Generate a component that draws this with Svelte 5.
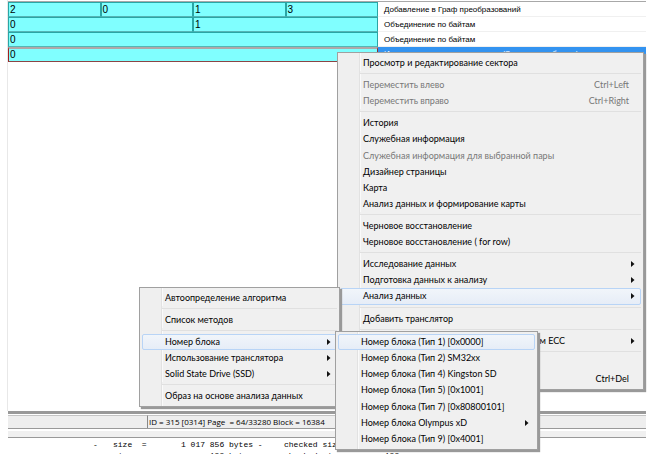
<script>
  const rows = [
    { cells: [['2', 1], ['0', 1], ['1', 1], ['3', 1]], note: 'Добавление в Граф преобразований' },
    { cells: [['0', 2], ['1', 2]], note: 'Объединение по байтам' },
    { cells: [['0', 4]], note: 'Объединение по байтам' },
    { cells: [['0', 4]], note: 'Исходные данные для анализа (Запись с разбором)', current: true }
  ];

  const sep = { sep: true };
  const menus = [
    {
      name: 'context',
      items: [
        { text: 'Просмотр и редактирование сектора' },
        sep,
        { text: 'Переместить влево', key: 'Ctrl+Left', off: true },
        { text: 'Переместить вправо', key: 'Ctrl+Right', off: true },
        sep,
        { text: 'История' },
        { text: 'Служебная информация' },
        { text: 'Служебная информация для выбранной пары', off: true },
        { text: 'Дизайнер страницы' },
        { text: 'Карта' },
        { text: 'Анализ данных и формирование карты' },
        sep,
        { text: 'Черновое восстановление' },
        { text: 'Черновое восстановление ( for row)' },
        sep,
        { text: 'Исследование данных', sub: true },
        { text: 'Подготовка данных к анализу', sub: true },
        { text: 'Анализ данных', sub: true, open: true },
        sep,
        { text: 'Добавить транслятор' },
        sep,
        { text: 'Коррекция ошибок по выбранным методам ECC', sub: true },
        sep,
        { text: 'Свойства' },
        { text: 'Удалить', key: 'Ctrl+Del' }
      ]
    },
    {
      name: 'analysis',
      items: [
        { text: 'Автоопределение алгоритма' },
        sep,
        { text: 'Список методов' },
        sep,
        { text: 'Номер блока', sub: true, open: true },
        { text: 'Использование транслятора', sub: true },
        { text: 'Solid State Drive (SSD)', sub: true },
        sep,
        { text: 'Образ на основе анализа данных' }
      ]
    },
    {
      name: 'types',
      items: [
        { text: 'Номер блока (Тип 1) [0x0000]', open: true },
        { text: 'Номер блока (Тип 2) SM32xx' },
        { text: 'Номер блока (Тип 4) Kingston SD' },
        { text: 'Номер блока (Тип 5) [0x1001]' },
        { text: 'Номер блока (Тип 7) [0x80800101]' },
        { text: 'Номер блока Olympus xD', sub: true },
        { text: 'Номер блока (Тип 9) [0x4001]' }
      ]
    }
  ];

  const log = [
    ['-', 'size  =', '1 017 856 bytes -', 'checked size = 1 017 856'],
    ['-', 'size  =', '      188 bytes -', 'checked size =       188']
  ];
</script>

<div class="window">
  <div class="work">
    <table>
      <colgroup><col class="q" /><col class="q" /><col class="q" /><col class="q" /><col /></colgroup>
      <tbody>
        {#each rows as row}
          <tr class:current={row.current}>
            {#each row.cells as [value, span]}
              <td class="block" colspan={span}>{value}</td>
            {/each}
            <td class="note">{row.note}</td>
          </tr>
        {/each}
      </tbody>
    </table>
  </div>

  <footer class="status">
    <div class="pane"></div>
    <div class="pane info">ID = 315 [0314] Page &nbsp;= 64/33280 Block = 16384</div>
  </footer>
  <div class="splitter"></div>
  <div class="log">
    {#each log as line}
      <div class="line">
        {#each line as part}<span>{part}</span>{/each}
      </div>
    {/each}
  </div>

  {#each menus as menu}
    <div class="menu {menu.name}" role="menu">
      {#each menu.items as item}
        {#if item.sep}
          <div class="sep" role="separator"></div>
        {:else}
          <button role="menuitem" class:open={item.open} disabled={item.off}>
            <span class="label">{item.text}</span>
            {#if item.key}<span class="key">{item.key}</span>{/if}
            {#if item.sub}
              <svg width="4" height="6" viewBox="0 0 4 6" aria-hidden="true"><path d="M0 0L3.5 3L0 6Z" fill="#111" /></svg>
            {/if}
          </button>
        {/if}
      {/each}
    </div>
  {/each}
</div>

<style>
  :global(body) {
    margin: 0;
    background: #fff;
    overflow: hidden;
  }
  .window {
    position: relative;
    box-sizing: border-box;
    height: 100vh;
    padding: 0 4px 0 7px;
    overflow: hidden;
    display: flex;
    flex-direction: column;
    font-family: Lato, 'Open Sans', sans-serif;
    font-size: 9px;
    color: #000;
  }
  .work {
    flex: 1;
    min-height: 0;
    padding-top: 1px;
    border-left: 1px solid #e8e8e8;
  }
  table {
    width: 100%;
    table-layout: fixed;
    border-collapse: separate;
    border-spacing: 0;
    border-top: 1px solid #a8a8a8;
    font-family: 'Liberation Sans', sans-serif;
  }
  .q {
    width: 14.5%;
  }
  td {
    box-sizing: border-box;
    height: 15px;
    padding: 0 1px;
    line-height: 12px;
    white-space: nowrap;
    overflow: hidden;
  }
  .block {
    background: #80ffff;
    border: 1px solid #2aa5a5;
    border-bottom-color: #55b5b5;
    font-size: 10px;
  }
  .note {
    padding: 1px 6px 0;
    border-bottom: 1px solid #f0f0f0;
    font-size: 8px;
  }
  .current .block {
    border-color: #b0a8a8 #8a3030 #8a4545 #a02020;
    border-top-width: 2px;
  }
  .current .note {
    padding-top: 0;
    background: #3393f0;
    color: #fff;
  }
  .status {
    display: flex;
    height: 13px;
    padding-top: 1px;
    margin-left: 1px;
    border-top: 3px solid #999;
    border-bottom: 1px solid #999;
    background: #fff;
  }
  .pane {
    flex: 0 0 139px;
    border-top: 1px solid #c4c4c4;
    background: #eee;
    line-height: 12px;
  }
  .info {
    flex: 1;
    border-left: 1px solid #888;
    padding-left: 1px;
    font-family: 'Open Sans', sans-serif;
    font-size: 8px;
    white-space: nowrap;
  }
  .splitter {
    height: 6px;
    margin: 2px 0 0 1px;
    background: #f0f0f0;
    border-bottom: 1px solid #999;
  }
  .log {
    height: 15px;
    padding: 1px 0 0 86px;
    overflow: hidden;
    font: 8px/11px 'Liberation Mono', monospace;
  }
  .line {
    display: grid;
    grid-template-columns: 20px 68px 103px 1fr;
    white-space: pre;
  }
  .menu {
    position: absolute;
    box-sizing: border-box;
    display: flex;
    flex-direction: column;
    padding: 2px;
    border: 1px solid #a0a0a0;
    background: linear-gradient(90deg, #efefef 21px, #e2e2e2 21px, #e2e2e2 22px, #fafafa 22px, #fafafa 23px, #f0f0f0 23px);
    box-shadow: 2px 2px 1px #999;
  }
  .context {
    left: 337px;
    top: 52px;
    width: 307px;
    height: 338px;
  }
  .analysis {
    left: 139px;
    top: 287px;
    width: 201px;
    height: 120px;
  }
  .types {
    left: 335px;
    top: 331px;
    width: 203px;
    height: 119px;
  }
  button {
    flex: 1 1 16px;
    min-height: 0;
    display: flex;
    align-items: center;
    box-sizing: border-box;
    padding: 0 5px 0 22px;
    border: 1px solid transparent;
    border-radius: 2px;
    background: none;
    font: inherit;
    line-height: 14px;
    color: #000;
    text-align: left;
    white-space: nowrap;
  }
  button:disabled {
    color: #777;
  }
  button.open {
    border-color: #b8d4f6;
    background: linear-gradient(#f1f5fa, #e6edf7);
  }
  .label {
    flex: 1;
  }
  .key {
    padding-right: 6px;
  }
  .sep {
    flex: 0 0 6px;
    box-sizing: border-box;
    margin-left: 20px;
    border-bottom: 3px solid transparent;
    background: linear-gradient(#f0f0f0 2px, #e0e0e0 2px) padding-box;
  }
</style>
